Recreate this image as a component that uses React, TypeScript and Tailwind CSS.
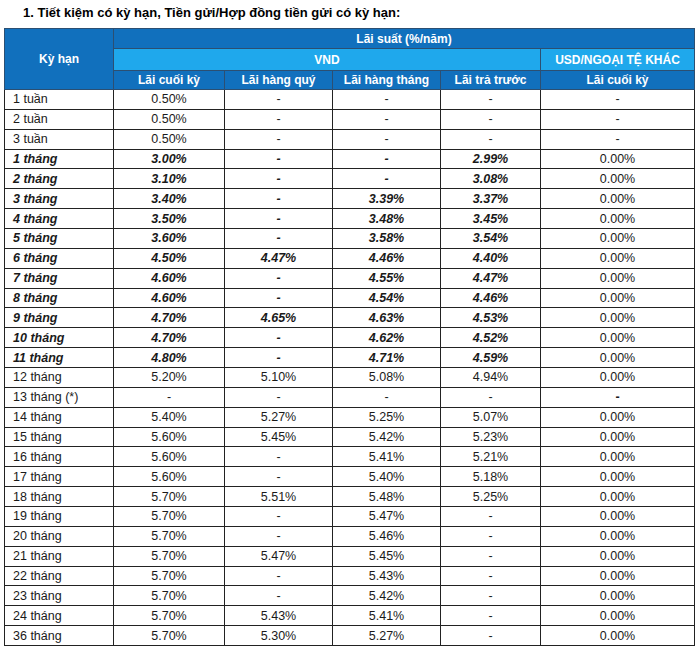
import React from "react";

type Row = { term: string; vals: string[]; em?: boolean };

const rows: Row[] = [
  { term: "1 tuần", vals: ["0.50%", "-", "-", "-", "-"] },
  { term: "2 tuần", vals: ["0.50%", "-", "-", "-", "-"] },
  { term: "3 tuần", vals: ["0.50%", "-", "-", "-", "-"] },
  { term: "1 tháng", vals: ["3.00%", "-", "-", "2.99%", "0.00%"], em: true },
  { term: "2 tháng", vals: ["3.10%", "-", "-", "3.08%", "0.00%"], em: true },
  { term: "3 tháng", vals: ["3.40%", "-", "3.39%", "3.37%", "0.00%"], em: true },
  { term: "4 tháng", vals: ["3.50%", "-", "3.48%", "3.45%", "0.00%"], em: true },
  { term: "5 tháng", vals: ["3.60%", "-", "3.58%", "3.54%", "0.00%"], em: true },
  { term: "6 tháng", vals: ["4.50%", "4.47%", "4.46%", "4.40%", "0.00%"], em: true },
  { term: "7 tháng", vals: ["4.60%", "-", "4.55%", "4.47%", "0.00%"], em: true },
  { term: "8 tháng", vals: ["4.60%", "-", "4.54%", "4.46%", "0.00%"], em: true },
  { term: "9 tháng", vals: ["4.70%", "4.65%", "4.63%", "4.53%", "0.00%"], em: true },
  { term: "10 tháng", vals: ["4.70%", "-", "4.62%", "4.52%", "0.00%"], em: true },
  { term: "11 tháng", vals: ["4.80%", "-", "4.71%", "4.59%", "0.00%"], em: true },
  { term: "12 tháng", vals: ["5.20%", "5.10%", "5.08%", "4.94%", "0.00%"] },
  { term: "13 tháng (*)", vals: ["-", "-", "-", "-", "-"] },
  { term: "14 tháng", vals: ["5.40%", "5.27%", "5.25%", "5.07%", "0.00%"] },
  { term: "15 tháng", vals: ["5.60%", "5.45%", "5.42%", "5.23%", "0.00%"] },
  { term: "16 tháng", vals: ["5.60%", "-", "5.41%", "5.21%", "0.00%"] },
  { term: "17 tháng", vals: ["5.60%", "-", "5.40%", "5.18%", "0.00%"] },
  { term: "18 tháng", vals: ["5.70%", "5.51%", "5.48%", "5.25%", "0.00%"] },
  { term: "19 tháng", vals: ["5.70%", "-", "5.47%", "-", "0.00%"] },
  { term: "20 tháng", vals: ["5.70%", "-", "5.46%", "-", "0.00%"] },
  { term: "21 tháng", vals: ["5.70%", "5.47%", "5.45%", "-", "0.00%"] },
  { term: "22 tháng", vals: ["5.70%", "-", "5.43%", "-", "0.00%"] },
  { term: "23 tháng", vals: ["5.70%", "-", "5.42%", "-", "0.00%"] },
  { term: "24 tháng", vals: ["5.70%", "5.43%", "5.41%", "-", "0.00%"] },
  { term: "36 tháng", vals: ["5.70%", "5.30%", "5.27%", "-", "0.00%"] },
];

const th = "border border-[#2c4f72] text-white font-bold text-[12px] text-center p-0";

export default function App() {
  return (
    <div
      className="w-[700px] h-[649px] overflow-hidden bg-white text-[#1a1a1a]"
      style={{ fontFamily: '"Liberation Sans", Arial, sans-serif' }}
    >
      <div className="h-[28px] pl-[23px] pt-[5px] text-[13px] font-bold leading-[16px] text-black">
        1. Tiết kiệm có kỳ hạn, Tiền gửi/Hợp đồng tiền gửi có kỳ hạn:
      </div>
      <div className="pl-[4px]">
        <table className="w-[690px] table-fixed border-collapse border border-[#222]">
          <colgroup>
            <col className="w-[109px]" />
            <col className="w-[111px]" />
            <col className="w-[108px]" />
            <col className="w-[108px]" />
            <col className="w-[100px]" />
            <col className="w-[154px]" />
          </colgroup>
          <thead>
            <tr className="h-[20px]">
              <th rowSpan={3} className={`${th} bg-[#1170bd]`}>
                Kỳ hạn
              </th>
              <th colSpan={5} className={`${th} bg-[#1170bd]`}>
                Lãi suất (%/năm)
              </th>
            </tr>
            <tr className="h-[22px]">
              <th colSpan={4} className={`${th} bg-[#1fa8ec]`}>
                VND
              </th>
              <th className={`${th} bg-[#1fa8ec]`}>USD/NGOẠI TỆ KHÁC</th>
            </tr>
            <tr className="h-[19px]">
              <th className={`${th} bg-[#1170bd]`}>Lãi cuối kỳ</th>
              <th className={`${th} bg-[#1170bd]`}>Lãi hàng quý</th>
              <th className={`${th} bg-[#1170bd]`}>Lãi hàng tháng</th>
              <th className={`${th} bg-[#1170bd]`}>Lãi trả trước</th>
              <th className={`${th} bg-[#1170bd]`}>Lãi cuối kỳ</th>
            </tr>
          </thead>
          <tbody>
            {rows.map((r) => {
              const em = r.em ? "font-bold italic" : "";
              return (
                <tr key={r.term} className="h-[19.86px] text-[12.5px] leading-[14px]">
                  <td className={`border border-[#222] pl-[8px] py-0 ${em}`}>{r.term}</td>
                  {r.vals.map((v, i) => {
                    const usd = i === 4;
                    const style = usd ? (r.term.startsWith("13") ? "font-bold" : "") : em;
                    return (
                      <td key={i} className={`border border-[#222] text-center py-0 ${style}`}>
                        {v}
                      </td>
                    );
                  })}
                </tr>
              );
            })}
          </tbody>
        </table>
      </div>
    </div>
  );
}
